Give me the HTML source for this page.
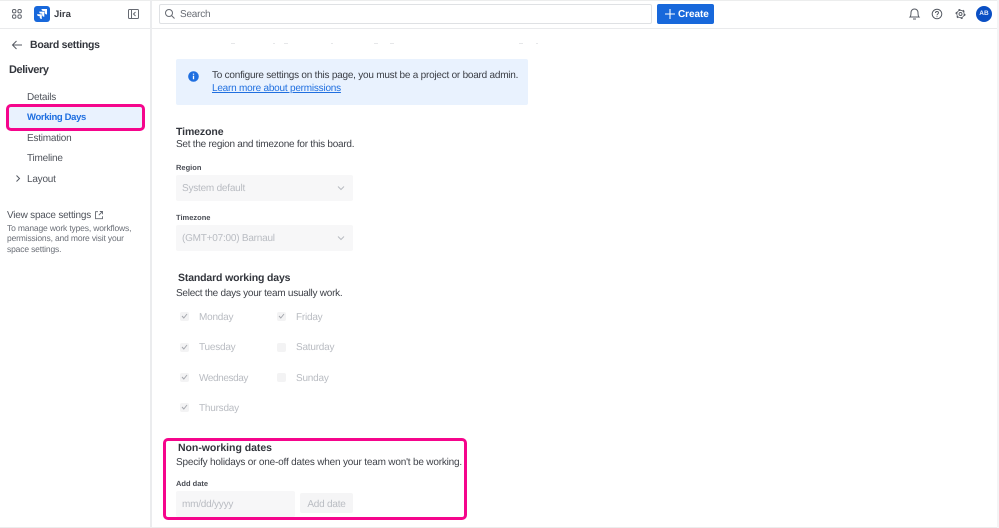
<!DOCTYPE html>
<html><head><meta charset="utf-8"><style>
html,body{margin:0;padding:0}
body{width:999px;height:528px;position:relative;overflow:hidden;background:#fff;font-family:"Liberation Sans",sans-serif;color:#2c2f36}
.t{position:absolute;white-space:nowrap;line-height:14px;font-size:10px;letter-spacing:-.22px;filter:blur(.3px);text-rendering:geometricPrecision}
.b{font-weight:bold}
.box{position:absolute;box-sizing:border-box}
.g{color:#b9bcc2}
.cb{position:absolute;width:9px;height:9px;background:#f3f3f4;border-radius:2px}
.d{position:absolute;top:43px;height:1px;width:4px;background:#e6e7e9}
svg{position:absolute;overflow:visible;fill:none}
</style></head><body>
<div class="box" style="left:0;top:0;width:999px;height:1px;background:#eceded"></div>
<div class="box" style="left:0;top:28px;width:999px;height:1px;background:#e9eaec"></div>
<div class="box" style="left:150px;top:0;width:2px;height:528px;background:#ebecee"></div>
<div class="box" style="left:0;top:527px;width:999px;height:1px;background:#eceded"></div>
<div class="box" style="left:997px;top:0;width:2px;height:528px;background:#f4f4f5"></div>

<svg style="left:12px;top:9px" width="10" height="10" stroke="#60646c" stroke-width="1"><rect x=".5" y=".5" width="3.400" height="3.400" rx="1.400"/><rect x="5.900" y=".5" width="3.400" height="3.400" rx="1.400"/><rect x=".5" y="5.900" width="3.400" height="3.400" rx="1.400"/><rect x="5.900" y="5.900" width="3.400" height="3.400" rx="1.400"/></svg>
<div class="box" style="left:34px;top:6px;width:16px;height:16px;background:#1868db;border-radius:3px"></div>
<svg style="left:34px;top:6px" width="16" height="16"><path style="fill:#fff" d="M7.500 3h5.500v5.500c-1.600 0-2.300-.9-2.300-2.200V5H9.500C8.200 5 7.500 4.300 7.500 3zM5.200 5.600h5.100v5.100c-1.500 0-2.200-.9-2.200-2.100V7.600H7.200C6 7.600 5.200 6.900 5.200 5.600zM3 8.200h4.800V13c-1.500 0-2.100-.9-2.100-2V10.100H5C3.800 10.100 3 9.400 3 8.200z"/></svg>
<div class="t b" style="left:54px;top:8px;font-size:9.500px;letter-spacing:0;color:#3a3d44">Jira</div>
<svg style="left:128px;top:9px" width="11" height="10" stroke="#666a72" stroke-width="1"><rect x=".5" y=".5" width="10" height="9" rx="1"/><path d="M3.500 .5v9M7.500 3l-2 2 2 2"/></svg>

<svg style="left:12px;top:40px" width="10" height="10" stroke="#555a63" stroke-width="1"><path d="M.5 5H10M4.500 1L.5 5l4 4"/></svg>
<div class="t b" style="left:30px;top:38px;font-size:10.500px;letter-spacing:-.27px;color:#33363d">Board settings</div>
<div class="t b" style="left:9px;top:63px;font-size:11px;letter-spacing:-.4px;color:#33363d">Delivery</div>
<div class="t" style="left:27px;top:91px;color:#4f535b">Details</div>
<div class="box" style="left:6px;top:104px;width:139px;height:27px;background:#e9f2fe;border:3px solid #f5058c;border-radius:5px"></div>
<div class="t b" style="left:27px;top:111px;font-size:9.500px;letter-spacing:-.35px;color:#1f6fe0">Working Days</div>
<div class="t" style="left:27px;top:132px;color:#4f535b">Estimation</div>
<div class="t" style="left:27px;top:152px;color:#4f535b">Timeline</div>
<svg style="left:16px;top:175px" width="4" height="7" stroke="#555a63" stroke-width="1"><path d="M.5 .5l3 3-3 3"/></svg>
<div class="t" style="left:27px;top:173px;color:#4f535b">Layout</div>
<div class="t" style="left:7px;top:209px;color:#4f535b">View space settings</div>
<svg style="left:95px;top:211px" width="8" height="8" stroke="#666a72" stroke-width=".9"><path d="M3 .7H.5v7h7V5.200M3.800 4.200L7.500 .5M4.800 .5h2.700v2.700"/></svg>
<div class="t" style="left:7px;top:222.500px;font-size:8.500px;line-height:10.500px;letter-spacing:-.16px;color:#6b6f77">To manage work types, workflows,<br>permissions, and more visit your<br>space settings.</div>

<div class="box" style="left:159px;top:4px;width:493px;height:20px;border:1px solid #dfe1e4;border-radius:2px;background:#fff"></div>
<svg style="left:165px;top:9px" width="10" height="10" stroke="#666a72" stroke-width="1"><circle cx="4" cy="4" r="3.500"/><path d="M6.500 6.500l3 3"/></svg>
<div class="t" style="left:180px;top:8px;color:#686c74">Search</div>
<div class="box" style="left:657px;top:4px;width:57px;height:20px;background:#1868db;border-radius:2px"></div>
<svg style="left:665px;top:9px" width="10" height="10" stroke="#fff" stroke-width="1.100"><path d="M5 0v10M0 5h10"/></svg>
<div class="t b" style="left:678px;top:8px;color:#fff;font-size:10px;letter-spacing:-.07px">Create</div>
<svg style="left:909px;top:8px" width="11" height="12" stroke="#555a63" stroke-width="1"><path d="M1 9c1-1 1-2 1-4.500C2 2.500 3.500 1 5.500 1S9 2.500 9 4.500C9 7 9 8 10 9zM4 11h3"/></svg>
<svg style="left:932px;top:9px" width="10" height="10" stroke="#555a63" stroke-width="1"><circle cx="5" cy="5" r="4.800"/><path d="M3.500 4c0-2 3-2 3-.2C6.500 5 5 5 5 6.300M5 7.300v.8"/></svg>
<svg style="left:955px;top:8px" width="11" height="12"><circle cx="5.500" cy="6" r="4.400" stroke="#555a63" stroke-width="1.200" stroke-dasharray="2 2.610"/><circle cx="5.500" cy="6" r="3.700" stroke="#555a63" stroke-width=".8" style="fill:#fff"/><circle cx="5.500" cy="6" r="1.500" stroke="#555a63" stroke-width=".9"/></svg>
<div class="box" style="left:976px;top:6px;width:16px;height:16px;border-radius:50%;background:#0a4fc4"></div>
<div class="t b" style="left:976px;top:7px;width:16px;text-align:center;font-size:6.500px;letter-spacing:0;color:#dfe8fa">AB</div>

<div class="d" style="left:231px"></div><div class="d" style="left:273px;width:2px"></div><div class="d" style="left:284px"></div><div class="d" style="left:331px;width:2px"></div><div class="d" style="left:374px"></div><div class="d" style="left:390px"></div><div class="d" style="left:519px"></div><div class="d" style="left:536px;width:2px"></div>
<div class="box" style="left:176px;top:59px;width:352px;height:46px;background:#e9f2fe;border-radius:2px"></div>
<svg style="left:188px;top:71px" width="11" height="11"><circle style="fill:#1f6fe0" cx="5.500" cy="5.500" r="5.300"/><path stroke="#fff" stroke-width="1.300" d="M5.500 4.800v3.400M5.500 2.600v1.200"/></svg>
<div class="t" style="left:212px;top:69px;letter-spacing:-.23px;color:#3a3d44">To configure settings on this page, you must be a project or board admin.</div>
<div class="t" style="left:212px;top:82px;color:#1f6fe0;text-decoration:underline">Learn more about permissions</div>

<div class="t b" style="left:176px;top:125px;font-size:10.500px;letter-spacing:-.1px;color:#33363d">Timezone</div>
<div class="t" style="left:176px;top:138px;letter-spacing:-.25px;color:#3f4249">Set the region and timezone for this board.</div>
<div class="t b" style="left:176px;top:161px;font-size:7.500px;letter-spacing:0;color:#4a4d55">Region</div>
<div class="box" style="left:176px;top:175px;width:177px;height:26px;background:#f7f7f8;border-radius:2px"></div>
<div class="t g" style="left:182px;top:182px">System default</div>
<svg style="left:337px;top:186px" width="8" height="5" stroke="#b9bcc2" stroke-width="1"><path d="M1 .5l3 3 3-3"/></svg>
<div class="t b" style="left:176px;top:211px;font-size:7.500px;letter-spacing:0;color:#4a4d55">Timezone</div>
<div class="box" style="left:176px;top:225px;width:177px;height:26px;background:#f7f7f8;border-radius:2px"></div>
<div class="t g" style="left:182px;top:232px">(GMT+07:00) Barnaul</div>
<svg style="left:337px;top:236px" width="8" height="5" stroke="#b9bcc2" stroke-width="1"><path d="M1 .5l3 3 3-3"/></svg>

<div class="t b" style="left:178px;top:271px;font-size:10.500px;letter-spacing:-.15px;color:#33363d">Standard working days</div>
<div class="t" style="left:176px;top:287px;letter-spacing:-.25px;color:#3f4249">Select the days your team usually work.</div>

<div class="cb" style="left:180px;top:312px"></div><svg style="left:181px;top:313px" width="7" height="6" stroke="#a5a8ae" stroke-width="1"><path d="M1 3l1.800 2L6 1"/></svg>
<div class="t g" style="left:199px;top:311px">Monday</div>
<div class="cb" style="left:180px;top:343px"></div><svg style="left:181px;top:344px" width="7" height="6" stroke="#a5a8ae" stroke-width="1"><path d="M1 3l1.800 2L6 1"/></svg>
<div class="t g" style="left:199px;top:341px">Tuesday</div>
<div class="cb" style="left:180px;top:373px"></div><svg style="left:181px;top:374px" width="7" height="6" stroke="#a5a8ae" stroke-width="1"><path d="M1 3l1.800 2L6 1"/></svg>
<div class="t g" style="left:199px;top:372px;letter-spacing:-.4px">Wednesday</div>
<div class="cb" style="left:180px;top:403px"></div><svg style="left:181px;top:404px" width="7" height="6" stroke="#a5a8ae" stroke-width="1"><path d="M1 3l1.800 2L6 1"/></svg>
<div class="t g" style="left:199px;top:402px">Thursday</div>
<div class="cb" style="left:277px;top:312px"></div><svg style="left:278px;top:313px" width="7" height="6" stroke="#a5a8ae" stroke-width="1"><path d="M1 3l1.800 2L6 1"/></svg>
<div class="t g" style="left:296px;top:311px">Friday</div>
<div class="cb" style="left:277px;top:343px"></div>
<div class="t g" style="left:296px;top:341px">Saturday</div>
<div class="cb" style="left:277px;top:373px"></div>
<div class="t g" style="left:296px;top:372px">Sunday</div>

<div class="box" style="left:163px;top:438px;width:304px;height:82px;border:3px solid #f5058c;border-radius:5px"></div>
<div class="t b" style="left:178px;top:441px;font-size:10.500px;letter-spacing:-.03px;color:#33363d">Non-working dates</div>
<div class="t" style="left:176px;top:456px;letter-spacing:-.19px;color:#3f4249">Specify holidays or one-off dates when your team won't be working.</div>
<div class="t b" style="left:176px;top:477px;font-size:7.500px;letter-spacing:0;color:#4a4d55">Add date</div>
<div class="box" style="left:176px;top:491px;width:119px;height:26px;background:#f7f7f8;border-radius:2px"></div>
<div class="t g" style="left:182px;top:498px">mm/dd/yyyy</div>
<div class="box" style="left:300px;top:493px;width:53px;height:20px;background:#f5f5f6;border-radius:2px"></div>
<div class="t g" style="left:300px;top:498px;width:53px;text-align:center">Add date</div>
</body></html>
